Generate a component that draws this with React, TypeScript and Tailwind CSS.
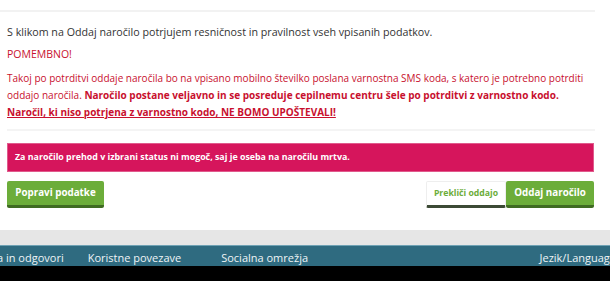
import React from "react";

export default function App() {
  return (
    <div
      className="w-[610px] h-[281px] overflow-hidden bg-white flex flex-col"
      style={{ fontFamily: '"Open Sans", "Liberation Sans", sans-serif' }}
    >
      <div className="h-[10px] shrink-0" />
      <div className="h-[2px] w-[595px] bg-[#f2f2f2] shrink-0" />
      <div className="pl-[7px] w-[594px] flex flex-col shrink-0">
        <p className="mt-[12px] text-[10.7px] leading-[17px] text-[#333] whitespace-nowrap">
          S klikom na Oddaj naročilo potrjujem resničnost in pravilnost vseh vpisanih podatkov.
        </p>
        <p className="mt-[5px] text-[10.5px] leading-[17px] text-[#c8102e]">POMEMBNO!</p>
        <p className="mt-[7px] text-[10px] leading-[17px] text-[#c8102e] whitespace-nowrap">
          Takoj po potrditvi oddaje naročila bo na vpisano mobilno številko poslana varnostna SMS koda, s katero je potrebno potrditi
          <br />
          oddajo naročila.{" "}
          <b className="font-bold">
            Naročilo postane veljavno in se posreduje cepilnemu centru šele po potrditvi z varnostno kodo.
            <br />
            <span className="underline">Naročil, ki niso potrjena z varnostno kodo, NE BOMO UPOŠTEVALI!</span>
          </b>
        </p>
        <div className="mt-[8px] h-[2px] w-[588px] bg-[#f4f4f4]" />
        <div className="mt-[12px] h-[29px] w-[587px] bg-[#d6155c] border border-[#e05a8c] flex items-center pl-[7px]">
          <span className="text-white font-bold text-[8.85px] whitespace-nowrap">
            Za naročilo prehod v izbrani status ni mogoč, saj je oseba na naročilu mrtva.
          </span>
        </div>
        <div className="mt-[9px] w-[587px] flex items-start">
          <button className="h-[27px] w-[97px] bg-[#6cad3a] border-b-[3px] border-[#3f6b22] rounded-[2px] text-white font-bold text-[9.8px] whitespace-nowrap">
            Popravi podatke
          </button>
          <div className="ml-auto flex">
            <button className="h-[27px] w-[80px] bg-white border border-[#eeeeee] border-b-[3px] border-b-[#3c4a35] rounded-[2px] text-[#6cad3a] font-bold text-[8.7px] whitespace-nowrap">
              Prekliči oddajo
            </button>
            <button className="h-[27px] w-[88px] bg-[#6cad3a] border-b-[3px] border-[#3f6b22] rounded-[2px] text-white font-bold text-[9.8px] whitespace-nowrap">
              Oddaj naročilo
            </button>
          </div>
        </div>
      </div>
      <div className="mt-[22px] h-[15px] bg-[#e6e6e6] shrink-0" />
      <div className="h-[21px] pt-[4px] bg-[#2f6b80] border-t border-[#6fa2b4] flex items-center text-[#eef4f6] text-[11px] whitespace-nowrap shrink-0">
        <span className="-ml-[3px]">a in odgovori</span>
        <span className="ml-[24px]">Koristne povezave</span>
        <span className="ml-[40px]">Socialna omrežja</span>
        <span className="ml-auto mr-[-6px]">Jezik/Language</span>
      </div>
      <div className="flex-1 bg-black" />
    </div>
  );
}
